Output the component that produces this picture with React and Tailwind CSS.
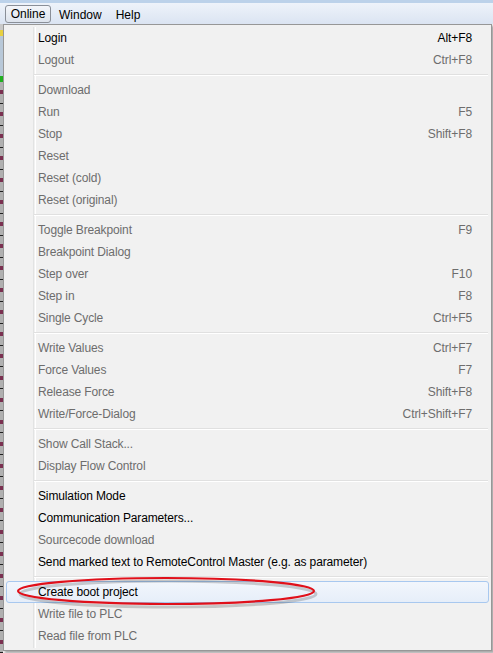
import React from "react";

const groups = [
  [
    ["Login", "Alt+F8", true],
    ["Logout", "Ctrl+F8", false],
  ],
  [
    ["Download", "", false],
    ["Run", "F5", false],
    ["Stop", "Shift+F8", false],
    ["Reset", "", false],
    ["Reset (cold)", "", false],
    ["Reset (original)", "", false],
  ],
  [
    ["Toggle Breakpoint", "F9", false],
    ["Breakpoint Dialog", "", false],
    ["Step over", "F10", false],
    ["Step in", "F8", false],
    ["Single Cycle", "Ctrl+F5", false],
  ],
  [
    ["Write Values", "Ctrl+F7", false],
    ["Force Values", "F7", false],
    ["Release Force", "Shift+F8", false],
    ["Write/Force-Dialog", "Ctrl+Shift+F7", false],
  ],
  [
    ["Show Call Stack...", "", false],
    ["Display Flow Control", "", false],
  ],
  [
    ["Simulation Mode", "", true],
    ["Communication Parameters...", "", true],
    ["Sourcecode download", "", false],
    ["Send marked text to RemoteControl Master (e.g. as parameter)", "", true],
  ],
  [
    ["Create boot project", "", true, true],
    ["Write file to PLC", "", false],
    ["Read file from PLC", "", false],
  ],
];

function Row({ label, shortcut, enabled, hl }) {
  return (
    <div
      className={
        "relative flex h-[22px] items-center pl-[31px] pr-[16px] " +
        (hl
          ? "rounded-[3px] border border-[#a8c8ef] bg-gradient-to-b from-[#f2f6fc] to-[#e6eef9]"
          : "border border-transparent")
      }
    >
      <span className={"flex-1 whitespace-nowrap tracking-[-0.13px] " + (enabled ? "text-black" : "text-[#6d6d6d]")}>
        {label}
      </span>
      {shortcut && (
        <span className={"tracking-[-0.1px] " + (enabled ? "text-black" : "text-[#6d6d6d]")}>{shortcut}</span>
      )}
    </div>
  );
}

export default function App() {
  return (
    <div
      className="relative h-[653px] w-[493px] overflow-hidden bg-[#f0f0f0] text-[12px]"
      style={{ fontFamily: '"Segoe UI", "Liberation Sans", Arial, sans-serif' }}
    >
      {/* menu bar */}
      <div className="flex h-[24px] flex-col">
        <div className="h-[4px] bg-[#bcd2ea]" />
        <div className="flex flex-1 items-start bg-gradient-to-b from-[#eef3fa] to-[#dbe4f2] pl-[5px] pt-[2px]">
          <div className="flex h-[18px] w-[46px] items-center justify-center rounded-[3px] border border-[#8a8f98] bg-gradient-to-b from-[#f4f6fa] to-[#dde3ec] text-black">
            Online
          </div>
          <div className="ml-[8px] mt-[1px] text-black">Window</div>
          <div className="ml-[14px] mt-[1px] text-black">Help</div>
        </div>
      </div>

      {/* left toolbar strip */}
      <div className="absolute left-0 top-[24px] flex h-[629px] w-[3px] flex-col bg-[#a0a0a0]">
        <div className="h-[6px] bg-[#c8c8c8]" />
        <div className="h-[6px] bg-[#e8d040]" />
        <div className="h-[40px] bg-[#b8c8d8]" />
        <div className="h-[6px] bg-[#20b020]" />
        {Array.from({ length: 26 }).map((_, i) => (
          <div key={i} className="flex h-[22px] flex-col justify-center border-b border-[#202020] bg-[#b0b0b0]">
            <div className="h-[4px] bg-[#7a3050]" />
          </div>
        ))}
      </div>

      {/* popup menu */}
      <div className="absolute left-[3px] top-[24px] h-[627px] w-[489px] border border-[#979797] bg-[#f1f1f1] p-[2px] shadow-[2px_2px_2px_rgba(0,0,0,0.3)]">
        <div className="absolute bottom-[2px] left-[29px] top-[2px] w-[2px] border-l border-[#e2e3e3] bg-[#f1f1f1] shadow-[1px_0_0_#ffffff]" />
        <div className="relative flex flex-col">
          {groups.map((g, gi) => (
            <div key={gi} className="flex flex-col">
              {gi > 0 && (
                <div className="flex h-[8px] items-center pl-[28px] pr-[1px]">
                  <div className="h-[2px] w-full border-t border-[#e0e0e0] bg-white" />
                </div>
              )}
              {g.map(([l, s, e, h]) => (
                <Row key={l} label={l} shortcut={s} enabled={e} hl={h} />
              ))}
            </div>
          ))}
        </div>
      </div>

      {/* red ellipse annotation */}
      <svg className="absolute left-[14px] top-[575px]" width="304" height="34" viewBox="0 0 304 34">
        <ellipse cx="153" cy="17" rx="148" ry="13" fill="none" stroke="rgba(0,0,0,0.18)" strokeWidth="3" transform="translate(1,2)" />
        <ellipse cx="152" cy="16" rx="148" ry="13" fill="none" stroke="#e0101a" strokeWidth="2.2" />
      </svg>
    </div>
  );
}
